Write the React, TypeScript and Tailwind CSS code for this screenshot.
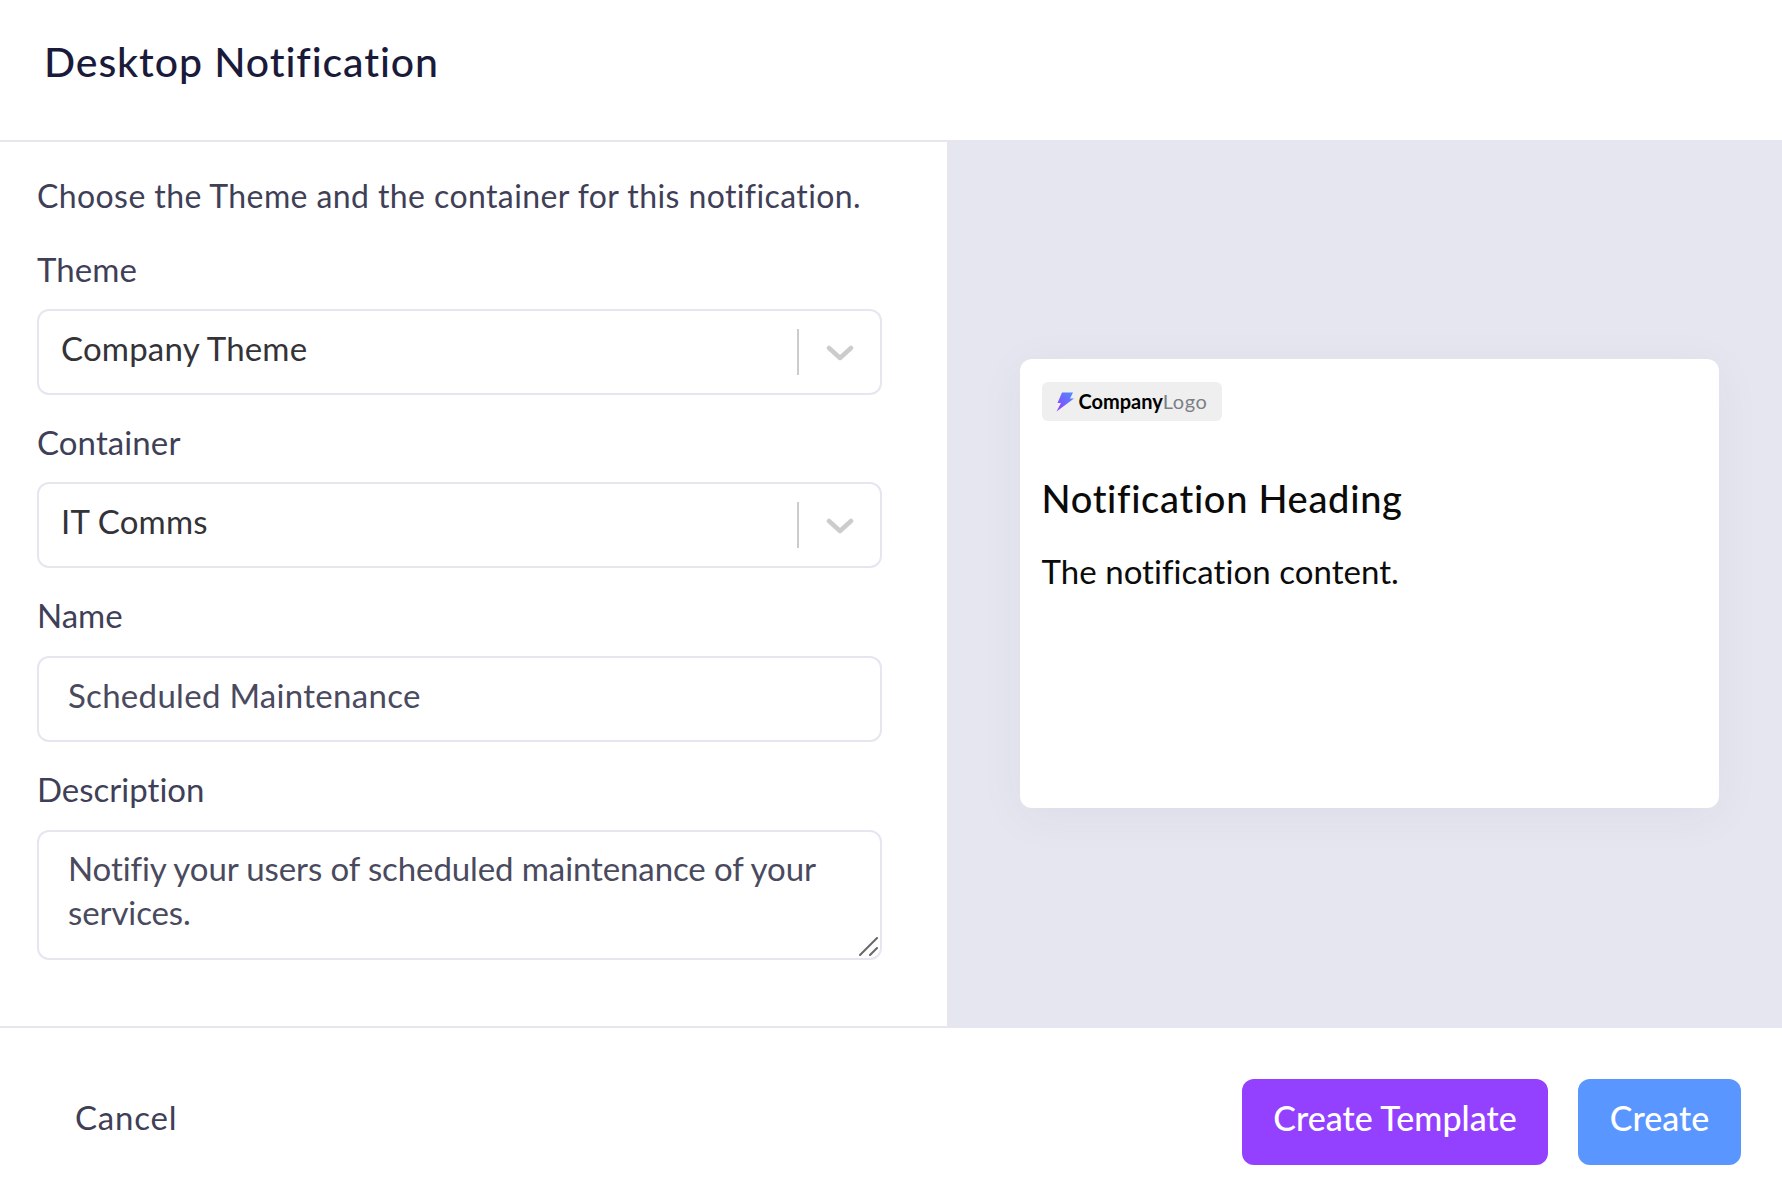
import React from 'react';

const SelectField: React.FC<{ label: string; value: string }> = ({ label, value }) => (
    <div className="flex flex-col">
        <label className="h-[40px] mb-[20px] text-[33px] leading-[40px] tracking-[0.1px] text-[#3f3f58]">{label}</label>
        <button className="flex items-center h-[86px] pl-[22px] border-2 border-[#e6e6f0] rounded-[12px] bg-white text-left">
            <span className="flex-1 pb-[7px] text-[33px] tracking-[0.2px] text-[#333338]">{value}</span>
            <span className="w-[2px] h-[46px] bg-[#cccccc]"></span>
            <svg className="w-[28px] h-[16px] ml-[27px] mr-[26px] mt-[2px]" viewBox="0 0 28 16" fill="none" stroke="#cccccc" strokeWidth={4.5} strokeLinecap="round" strokeLinejoin="round">
                <path d="M3 3l11 10L25 3" />
            </svg>
        </button>
    </div>
);

export default function App() {
    return (
        <div className="flex flex-col w-[1782px] h-[1202px] bg-white font-['Lato',sans-serif] [font-variant-ligatures:none] overflow-hidden">
            {/* Header */}
            <div className="flex items-center h-[142px] pl-[44px] pb-[16px] border-b-2 border-[#e6e6f0]">
                <h1 className="text-[41px] tracking-[0.9px] font-medium text-[#1a1a3a]">Desktop Notification</h1>
            </div>

            <div className="flex h-[884px]">
                {/* Form */}
                <div className="flex flex-col w-[947px] pl-[37px] pr-[65px] pt-[34px]">
                    <p className="h-[40px] mb-[33px] text-[32px] tracking-[0.4px] leading-[40px] text-[#3f3f58] whitespace-nowrap">Choose the Theme and the container for this notification.</p>
                    <div className="flex flex-col gap-[27px]">
                        <SelectField label="Theme" value="Company Theme" />
                        <SelectField label="Container" value="IT Comms" />
                        <div className="flex flex-col">
                            <label className="h-[40px] mb-[21px] text-[33px] leading-[40px] text-[#3f3f58]">Name</label>
                            <input
                                readOnly
                                value="Scheduled Maintenance"
                                className="h-[86px] px-[29px] pb-[8px] border-2 border-[#e6e6f0] rounded-[12px] text-[33px] tracking-[0.3px] text-[#4a4a5e] outline-none"
                            />
                        </div>
                        <div className="flex flex-col">
                            <label className="h-[40px] mb-[21px] text-[33px] leading-[40px] text-[#3f3f58]">Description</label>
                            <div className="relative">
                                <textarea
                                    readOnly
                                    value="Notifiy your users of scheduled maintenance of your services."
                                    className="block w-full h-[130px] px-[29px] pt-[14px] border-2 border-[#e6e6f0] rounded-[12px] text-[33px] tracking-[-0.1px] leading-[44px] text-[#4a4a5e] outline-none resize-none"
                                />
                                <svg className="absolute right-[3px] bottom-[4px] w-[20px] h-[20px]" viewBox="0 0 20 20" fill="none" stroke="#666666" strokeWidth={2} strokeLinecap="round">
                                    <path d="M1 19L18 2" />
                                    <path d="M11 19l7-7" />
                                </svg>
                            </div>
                        </div>
                    </div>
                </div>

                {/* Preview */}
                <div className="flex flex-1 items-center justify-center bg-[#e6e6f0]">
                    <div className="w-[699px] h-[449px] ml-[9px] mt-[-2px] pt-[23px] pl-[22px] rounded-[12px] bg-white shadow-[0_8px_48px_rgba(60,60,110,0.05)]">
                        <div className="flex items-center w-[180px] h-[39px] pl-[14px] rounded-[6px] bg-[#efefef]">
                            <svg className="w-[18px] h-[20px] mt-[2px] mr-[5px]" viewBox="0 0 18 20">
                                <defs>
                                    <linearGradient id="bolt" x1="1" y1="0" x2="0" y2="1">
                                        <stop offset="0" stopColor="#4f8dff" />
                                        <stop offset="1" stopColor="#8f3dff" />
                                    </linearGradient>
                                </defs>
                                <path d="M6 0.5h11l-3 6h4L0.5 19.5 5 11H1.5z" fill="url(#bolt)" />
                            </svg>
                            <span className="text-[20px] font-bold text-black">Company</span>
                            <span className="text-[20px] text-[#7b7f87] tracking-[0.5px]">Logo</span>
                        </div>
                        <h2 className="mt-[54px] h-[46px] text-[38px] tracking-[0.7px] leading-[46px] font-medium text-[#0b0b0b]">Notification Heading</h2>
                        <p className="mt-[30px] h-[40px] text-[33px] tracking-[0.05px] leading-[40px] text-[#0b0b0b]">The notification content.</p>
                    </div>
                </div>
            </div>

            {/* Footer */}
            <div className="flex flex-1 items-center justify-between pl-[75px] pr-[41px] pt-[14px] border-t-2 border-[#e6e6f0]">
                <button className="text-[33px] tracking-[0.8px] text-[#3f3f58] pb-[9px]">Cancel</button>
                <div className="flex items-center gap-[30px]">
                    <button className="w-[306px] h-[86px] pb-[9px] rounded-[12px] bg-[#9340ff] text-[34px] font-medium text-white">Create Template</button>
                    <button className="w-[163px] h-[86px] pb-[9px] rounded-[12px] bg-[#5a96ff] text-[34px] font-medium text-white">Create</button>
                </div>
            </div>
        </div>
    );
}
